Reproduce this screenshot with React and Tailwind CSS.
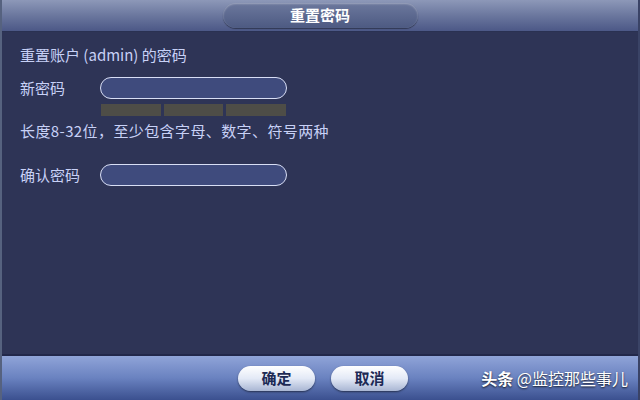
import React from 'react';

const font = { fontFamily: '"Noto Sans CJK SC", "Noto Sans", sans-serif' };

const PillInput = () => (
    <div className="w-[187px] h-[22px] rounded-full border-[1.5px] border-[#d8def5] bg-[#3f4b7d]" />
);

const Button = ({ children }) => (
    <button className="w-[77px] h-[25px] rounded-full bg-gradient-to-b from-[#ffffff] via-[#e3e9f6] to-[#a9b6d3] text-[#1d2a55] text-[15px] font-bold shadow-[0_1px_2px_rgba(0,0,0,0.5)]">
        {children}
    </button>
);

const App = () => {
    return (
        <div className="w-[640px] h-[400px] flex flex-col bg-[#2e3456] border-l-2 border-r-2 border-l-[#56627f] border-r-[#3a4366] overflow-hidden" style={font}>
            {/* header */}
            <div className="h-[32px] flex items-center justify-center bg-gradient-to-b from-[#8d98b8] via-[#6b779e] to-[#4c5887] border-b border-[#2a3152]">
                <div className="w-[195px] h-[25px] rounded-full bg-gradient-to-b from-[#6c789d] to-[#4d5a82] shadow-[inset_0_1px_2px_rgba(255,255,255,0.35),0_1px_1px_rgba(0,0,0,0.4)] flex items-center justify-center text-white text-[15px] font-bold">
                    重置密码
                </div>
            </div>

            {/* body */}
            <div className="flex-1 px-[18px] pt-[12px] text-[15px] text-[#c8d1f6]">
                <div className="h-[22px] leading-[22px]">重置账户 (admin) 的密码</div>
                <div className="flex items-center mt-[11px]">
                    <div className="w-[80px]">新密码</div>
                    <PillInput />
                </div>
                <div className="flex gap-[3px] ml-[81px] mt-[4px]">
                    <div className="w-[60px] h-[12px] bg-[#4e4d47]" />
                    <div className="w-[59px] h-[12px] bg-[#4e4d47]" />
                    <div className="w-[60px] h-[12px] bg-[#4e4d47]" />
                </div>
                <div className="mt-[4px] h-[22px] leading-[22px] tracking-[0.4px]">长度8-32位，至少包含字母、数字、符号两种</div>
                <div className="flex items-center mt-[22px]">
                    <div className="w-[80px]">确认密码</div>
                    <PillInput />
                </div>
            </div>

            {/* footer */}
            <div className="h-[46px] flex items-center bg-gradient-to-b from-[#90a4d8] via-[#6a82c0] to-[#3b508f] border-t-2 border-[#22284a]">
                <div className="flex gap-[16px] ml-[236px]">
                    <Button>确定</Button>
                    <Button>取消</Button>
                </div>
                <div className="ml-auto mr-[10px] text-white text-[16px] [text-shadow:0_1px_2px_rgba(0,0,0,0.8)]">
                    <span className="font-bold">头条</span> @监控那些事儿
                </div>
            </div>
        </div>
    );
};

export default App;
